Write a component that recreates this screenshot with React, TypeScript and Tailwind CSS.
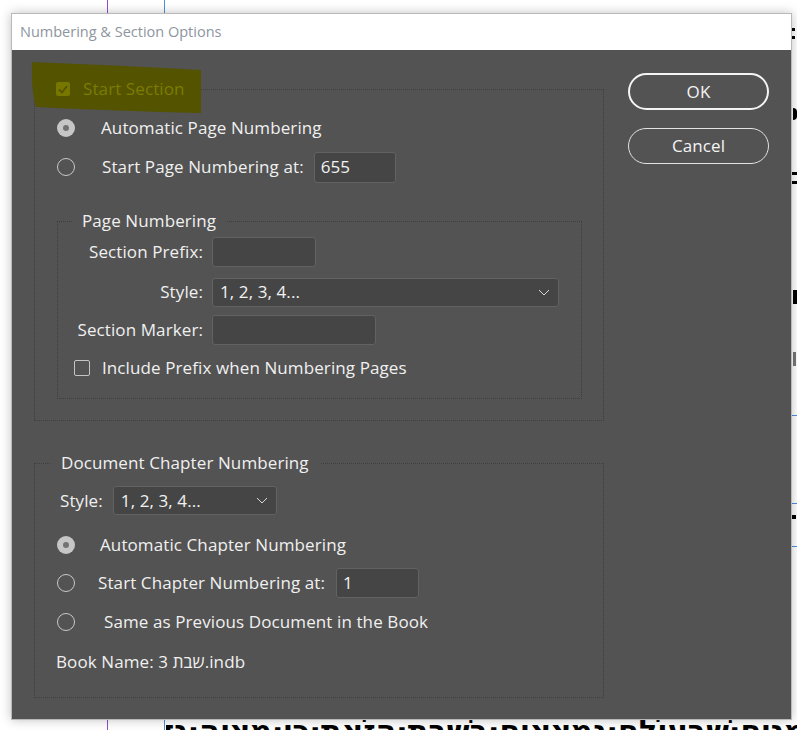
import React from "react";

const F = { fontFamily: '"Open Sans", "Noto Sans", sans-serif' };

function Radio({ checked }: { checked?: boolean }) {
  return checked ? (
    <span className="w-[18px] h-[18px] shrink-0 rounded-full bg-[#c6c6c6] flex items-center justify-center">
      <span className="w-[6px] h-[6px] rounded-full bg-[#727272]" />
    </span>
  ) : (
    <span className="w-[18px] h-[18px] shrink-0 rounded-full border border-[#c8c8c8]" />
  );
}

function Field({ w, h = 30, children }: { w: number; h?: number; children?: React.ReactNode }) {
  return (
    <div
      className="bg-[#454545] border border-[#626262] rounded-[3px] pl-[6px] flex items-center text-[#f2f2f2]"
      style={{ width: w, height: h }}
    >
      {children}
    </div>
  );
}

function Select({ w, h = 30, value }: { w: number; h?: number; value: string }) {
  return (
    <div
      className="bg-[#454545] border border-[#626262] rounded-[3px] pl-[7px] pr-[8px] flex items-center justify-between text-[#f2f2f2]"
      style={{ width: w, height: h }}
    >
      <span>{value}</span>
      <svg width="12" height="7" viewBox="0 0 12 7" fill="none">
        <path d="M1 1 L6 6 L11 1" stroke="#d8d8d8" strokeWidth="1" />
      </svg>
    </div>
  );
}

export default function App() {
  return (
    <div className="relative w-[797px] h-[730px] bg-white overflow-hidden text-[17px] tracking-[0.1px]" style={F}>
      {/* page behind the dialog */}
      <div className="absolute left-[107px] top-0 w-px h-full bg-[#8b4fd6]" />
      <div className="absolute left-[164px] top-0 w-px h-full bg-[#4a8fe0]" />
      <div className="absolute left-[792px] top-[415px] w-[5px] h-px bg-[#4a8fe0]" />
      <div className="absolute left-[792px] top-[503px] w-[5px] h-px bg-[#4a8fe0]" />
      <div className="absolute left-[792px] top-[546px] w-[5px] h-px bg-[#4a8fe0]" />
      <div className="absolute left-[792px] top-[28px] w-[3px] h-[3px] bg-black" />
      <div className="absolute left-[792px] top-[36px] w-[3px] h-[3px] bg-black" />
      <div className="absolute left-[793px] top-[108px] w-[4px] h-[12px] bg-black rounded-r-full" />
      <div className="absolute left-[792px] top-[172px] w-[5px] h-[3px] bg-black" />
      <div className="absolute left-[792px] top-[181px] w-[5px] h-[3px] bg-black" />
      <div className="absolute left-[793px] top-[290px] w-[4px] h-[14px] bg-black" />
      <div className="absolute left-[793px] top-[352px] w-[3px] h-[14px] bg-[#777]" />
      <div className="absolute left-[792px] top-[515px] w-[4px] h-[4px] bg-black" />
      <div
        dir="rtl"
        aria-hidden="true"
        className="absolute left-[166px] top-[716px] w-[640px] whitespace-nowrap overflow-hidden text-[30px] font-bold text-black leading-none"
        style={{ fontFamily: '"DejaVu Sans", sans-serif' }}
      >
        מִנִּים·שֶׁבְּעוֹלָם·נִמְצָאִים·בְּשַׁבָּת·הַזֹּאת·כִּי·מִצְוָה·גְּדוֹלָה
      </div>

      {/* dialog window */}
      <div className="absolute left-[11px] top-[13px] w-[781px] h-[707px] flex flex-col border border-[#b9b9b9] shadow-[0_0_10px_rgba(0,0,0,0.25)]">
        <div className="h-[36px] bg-white pl-[8px] flex items-center text-[14.5px] tracking-normal text-[#8d959e]">
          Numbering &amp; Section Options
        </div>
        <div className="relative flex-1 bg-[#535353] flex text-[#f0f0f0]">
          {/* highlighter mark */}
          <svg className="absolute left-[18px] top-[11px]" width="172" height="54" viewBox="0 0 172 54">
            <path d="M2 1 Q80 4 171 9 L171 52 Q90 50 6 46 Q1 30 2 1 Z" fill="#535300" />
          </svg>

          <div className="pl-[22px] pt-[28px]">
            {/* Start Section */}
            <fieldset className="w-[570px] border border-dotted border-[#3e3e3e] pb-[21px]">
              <legend className="relative ml-[11px] px-[10px] h-[22px] flex items-center">
                <span className="w-[14px] h-[14px] rounded-[2px] bg-[#777700] flex items-center justify-center">
                  <svg width="10" height="9" viewBox="0 0 10 9">
                    <path d="M1 4.5 L4 7.5 L9 1" stroke="#535300" strokeWidth="1.8" fill="none" />
                  </svg>
                </span>
                <span className="ml-[13px] text-[#7c7c00] text-[17px]">Start Section</span>
              </legend>

              <div className="mt-[12px] h-[32px] flex items-center pl-[22px]">
                <Radio checked />
                <span className="ml-[26px]">Automatic Page Numbering</span>
              </div>
              <div className="mt-[7px] h-[32px] flex items-center pl-[22px]">
                <Radio />
                <span className="ml-[27px]">Start Page Numbering at:</span>
                <div className="ml-[10px]">
                  <Field w={82} h={31}>655</Field>
                </div>
              </div>

              {/* Page Numbering */}
              <fieldset className="mt-[27px] ml-[22px] w-[525px] border border-dotted border-[#3e3e3e] pb-[18px]">
                <legend className="ml-[14px] px-[10px] leading-[22px]">Page Numbering</legend>
                <div className="mt-[5px] h-[30px] flex items-center">
                  <span className="w-[145px] text-right">Section Prefix:</span>
                  <div className="ml-[9px]">
                    <Field w={104} />
                  </div>
                </div>
                <div className="mt-[10px] h-[30px] flex items-center">
                  <span className="w-[145px] text-right">Style:</span>
                  <div className="ml-[9px]">
                    <Select w={347} h={29} value="1, 2, 3, 4..." />
                  </div>
                </div>
                <div className="mt-[8px] h-[30px] flex items-center">
                  <span className="w-[145px] text-right">Section Marker:</span>
                  <div className="ml-[9px]">
                    <Field w={164} />
                  </div>
                </div>
                <div className="mt-[11px] h-[24px] flex items-center pl-[16px]">
                  <span className="w-[16px] h-[16px] rounded-[2px] border border-[#c4c4c4]" />
                  <span className="ml-[12px]">Include Prefix when Numbering Pages</span>
                </div>
              </fieldset>
            </fieldset>

            {/* Document Chapter Numbering */}
            <fieldset className="mt-[31px] w-[570px] border border-dotted border-[#3e3e3e] pb-[23px]">
              <legend className="ml-[15px] px-[11px] leading-[22px]">Document Chapter Numbering</legend>
              <div className="mt-[12px] h-[29px] flex items-center pl-[25px]">
                <span>Style:</span>
                <div className="ml-[10px]">
                  <Select w={164} h={29} value="1, 2, 3, 4..." />
                </div>
              </div>
              <div className="mt-[14px] h-[32px] flex items-center pl-[22px]">
                <Radio checked />
                <span className="ml-[25px]">Automatic Chapter Numbering</span>
              </div>
              <div className="mt-[6px] h-[32px] flex items-center pl-[22px]">
                <Radio />
                <span className="ml-[23px]">Start Chapter Numbering at:</span>
                <div className="ml-[11px]">
                  <Field w={83}>1</Field>
                </div>
              </div>
              <div className="mt-[7px] h-[32px] flex items-center pl-[22px]">
                <Radio />
                <span className="ml-[29px]">Same as Previous Document in the Book</span>
              </div>
              <div className="mt-[12px] h-[24px] flex items-center pl-[21px]">
                <span>Book Name: שבת 3.indb</span>
              </div>
            </fieldset>
          </div>

          {/* buttons */}
          <div className="ml-[24px] pt-[23px] flex flex-col">
            <button className="w-[141px] h-[37px] rounded-full border-2 border-[#f4f4f4] flex items-center justify-center text-[#f4f4f4]">
              OK
            </button>
            <button className="mt-[18px] w-[141px] h-[36px] rounded-full border border-[#e2e2e2] flex items-center justify-center text-[#f4f4f4]">
              Cancel
            </button>
          </div>
        </div>
      </div>
    </div>
  );
}
